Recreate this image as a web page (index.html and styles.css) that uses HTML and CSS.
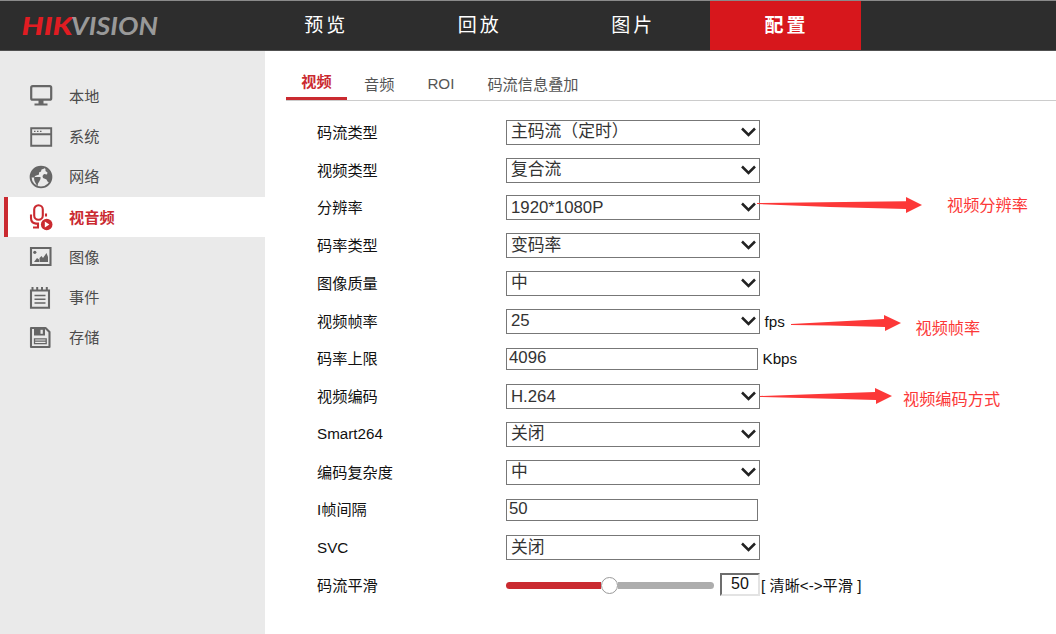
FILE: index.html
```html
<!DOCTYPE html>
<html lang="zh-CN">
<head>
  <meta charset="UTF-8">
  <meta name="viewport" content="width=device-width, initial-scale=1.0">
  <title>配置</title>
  <link rel="stylesheet" href="styles.css">
</head>
<body>

  <header class="header">
    <svg class="logo" width="150" height="48" viewBox="0 0 150 48">
      <text class="logo-red" x="1.500" y="34" textLength="51" lengthAdjust="spacingAndGlyphs">HIK</text>
      <text class="logo-gray" x="51" y="34" textLength="87" lengthAdjust="spacingAndGlyphs">VISION</text>
    </svg>
    <nav class="nav">
      <a class="nav-item">预览</a>
      <a class="nav-item">回放</a>
      <a class="nav-item">图片</a>
      <a class="nav-item active">配置</a>
    </nav>
  </header>

  <div class="page">
    <aside class="sidebar">
      <a class="menu-item">
        <svg class="icon" viewBox="0 0 24 24"><rect x="2.2" y="2.2" width="20" height="13.500" rx="1.5" fill="none" stroke="currentColor" stroke-width="2.2"/><path d="M9.5 16h5v3.500h4v2h-13v-2h4z"/></svg>
        <span>本地</span>
      </a>
      <a class="menu-item">
        <svg class="icon" viewBox="0 0 24 24"><path d="M2.2 3.2h20v17.6h-20zM2.2 9.2h20" fill="none" stroke="currentColor" stroke-width="1.9"/><path d="M5 5.7h1.5v1.2H5zM8 5.7h1.5v1.2H8zM11 5.7h1.5v1.2H11z"/></svg>
        <span>系统</span>
      </a>
      <a class="menu-item">
        <svg class="icon" viewBox="0 0 24 24"><circle cx="12" cy="12" r="10.4" fill="none" stroke="currentColor" stroke-width="1.9"/><path d="M12 1.500C6 1.500 1.500 6 1.500 12.500h3.500l1-.5h5.500v2l-1.500 3-1 1.500-.5 3-2-3.500-1-2-.5-2.500 1-2.500 4-1.500v-2l2-1 .5-2 3-1zM16.500 3l5 5 1 5-1.500 5-2.500-1.500-1-2-3.500-1.500-.5-2 1.500-2 3 .5.500-2-2-1.500z"/></svg>
        <span>网络</span>
      </a>
      <a class="menu-item active">
        <svg class="icon icon-mic" viewBox="0 0 24 27"><g fill="none" stroke="currentColor" stroke-width="2.1"><rect x="5.200" y="1.300" width="8.600" height="14.500" rx="4.300"/><path d="M2 10.500v3.500c0 3 2 5.300 5 5.600h3M9 19.500v4M4 23.500h6M17 9.500v3"/></g><circle cx="17.700" cy="20.500" r="5.800"/><path d="M15.800 17.600l4.600 2.900-4.600 2.900z" fill="#fff"/></svg>
        <span>视音频</span>
      </a>
      <a class="menu-item">
        <svg class="icon" viewBox="0 0 24 24"><path d="M2 3h19.500v17H2z" fill="none" stroke="currentColor" stroke-width="2.100"/><circle cx="5.800" cy="7.300" r="1.600"/><path d="M5 17l3-4 2 1.500V17zM10.500 17v-4l2-2 1.500 2 3.500-5 1.500 4v5z"/></svg>
        <span>图像</span>
      </a>
      <a class="menu-item">
        <svg class="icon" viewBox="0 0 24 24"><path d="M2 4.500h18v17.300H2z" fill="none" stroke="currentColor" stroke-width="2.100"/><path d="M2.500 1h2v3h-2zM7.200 1h2v3h-2zM12 1h2v3h-2zM16.800 1h2v3h-2z"/><path d="M5.500 9.500h11M5.500 13.300h11M5.500 17.100h11" stroke="currentColor" stroke-width="1.500"/></svg>
        <span>事件</span>
      </a>
      <a class="menu-item">
        <svg class="icon" viewBox="0 0 24 24"><path d="M2 2h14.500l4 4v15H2z" fill="none" stroke="currentColor" stroke-width="2.100" stroke-linejoin="round"/><path d="M5 2h11v7.500H5z"/><path d="M11.500 3.800h2.300v4h-2.300z" fill="#eaeaea"/><path d="M5.500 12.800h11.700v4.800H5.500zM5.500 15.200h11.700" fill="none" stroke="currentColor" stroke-width="1.300"/></svg>
        <span>存储</span>
      </a>
    </aside>

    <main class="content">
      <div class="tabs">
        <a class="tab active">视频</a>
        <a class="tab">音频</a>
        <a class="tab tab-roi">ROI</a>
        <a class="tab">码流信息叠加</a>
      </div>

      <form class="form">
        <div class="row">
          <label for="streamType">码流类型</label>
          <select id="streamType"><option>主码流（定时）</option></select>
        </div>
        <div class="row">
          <label for="videoType">视频类型</label>
          <select id="videoType"><option>复合流</option></select>
        </div>
        <div class="row">
          <label for="resolution">分辨率</label>
          <select id="resolution"><option>1920*1080P</option></select>
        </div>
        <div class="row">
          <label for="bitrateType">码率类型</label>
          <select id="bitrateType"><option>变码率</option></select>
        </div>
        <div class="row">
          <label for="quality">图像质量</label>
          <select id="quality"><option>中</option></select>
        </div>
        <div class="row">
          <label for="frameRate">视频帧率</label>
          <select id="frameRate"><option>25</option></select>
          <span class="unit">fps</span>
        </div>
        <div class="row">
          <label for="maxBitrate">码率上限</label>
          <input type="text" class="text-input" id="maxBitrate" value="4096">
          <span class="unit">Kbps</span>
        </div>
        <div class="row">
          <label for="encoding">视频编码</label>
          <select id="encoding"><option>H.264</option></select>
        </div>
        <div class="row">
          <label class="latin" for="smart264">Smart264</label>
          <select id="smart264"><option>关闭</option></select>
        </div>
        <div class="row">
          <label for="complexity">编码复杂度</label>
          <select id="complexity"><option>中</option></select>
        </div>
        <div class="row">
          <label for="iFrame">I帧间隔</label>
          <input type="text" class="text-input" id="iFrame" value="50">
        </div>
        <div class="row">
          <label class="latin" for="svc">SVC</label>
          <select id="svc"><option>关闭</option></select>
        </div>
        <div class="row">
          <label for="smoothing">码流平滑</label>
          <div class="slider">
            <span class="slider-fill"></span>
            <span class="slider-knob"></span>
            <span class="slider-rest"></span>
          </div>
          <input type="text" class="slider-value" id="smoothing" value="50">
          <span class="hint">[ 清晰&lt;-&gt;平滑 ]</span>
        </div>
      </form>
    </main>
  </div>

  <!-- red notes on top of the form -->
  <svg class="notes" width="1056" height="634" viewBox="0 0 1056 634">
    <path d="M757 203L906 201.300V197L922 205L906 213V209L830 207L757 204Z"/>
    <path d="M791 324L884 319V315L901 323L885 331V327L830 325.500L791 325Z"/>
    <path d="M760 396L875 392V388L892 396L876 404V400L840 399L760 397Z"/>
    <text x="947" y="211">视频分辨率</text>
    <text x="915.500" y="334">视频帧率</text>
    <text x="903" y="405">视频编码方式</text>
  </svg>

</body>
</html>
```
FILE: styles.css
```css
* {
  box-sizing: border-box;
}
body {
  margin: 0;
  width: 1056px;
  height: 634px;
  overflow: hidden;
  position: relative;
  background-color: #fff;
  color: #111;
  font-family: "Liberation Sans", "Noto Sans CJK SC", sans-serif;
  font-size: 15.2px;
}

/* top bar */
.header {
  display: flex;
  height: 51px;
  background-color: #2d2d2d;
  border-top: 1px solid #8a8a8a;
  border-bottom: 1px solid #505050;
}
.logo {
  margin: 0 79px 0 20px;
  font-family: Lato, sans-serif;
  font-size: 24.500px;
  font-style: italic;
}
.logo-red {
  fill: #e01c22;
  font-weight: 900;
}
.logo-gray {
  fill: #999;
  font-weight: 700;
}
.nav {
  display: flex;
}
.nav-item {
  width: 153.5px;
  padding-left: 1px;
  line-height: 49px;
  text-align: center;
  color: #fff;
  font-size: 19px;
  letter-spacing: 3px;
}
.nav-item.active {
  width: 151px;
  padding-left: 3px;
  background-color: #d7171c;
  font-weight: bold;
}

.page {
  display: flex;
  height: 583px;
}

/* left menu */
.sidebar {
  width: 265px;
  padding-top: 25.300px;
  background-color: #eaeaea;
}
.menu-item {
  display: flex;
  align-items: center;
  height: 40.250px;
  margin-left: 4px;
  padding-left: 25px;
  color: #4c4c4c;
}
.menu-item span {
  padding-bottom: 3px;
}
.menu-item.active {
  border-left: 4px solid #ca2a30;
  padding-left: 21px;
  background-color: #fff;
  color: #ca2a30;
  font-weight: bold;
}
.icon {
  width: 24px;
  height: 24px;
  margin-right: 16px;
  fill: currentColor;
  color: #666;
}
.icon-mic {
  height: 27px;
  color: #ca2a30;
}

/* right side */
.content {
  flex: 1;
  padding: 13px 0 0 21px;
}
.tabs {
  display: flex;
  height: 37px;
  border-bottom: 1px solid #ccc;
  color: #555;
  line-height: 41px;
}
.tab {
  margin-right: 33px;
}
.tab.active {
  width: 61px;
  height: 36px;
  margin-right: 17px;
  border-bottom: 3px solid #ca2a30;
  color: #ca2a30;
  font-weight: bold;
  line-height: 35px;
  text-align: center;
}
.tab-roi {
  line-height: 40px;
}

.form {
  padding: 12.600px 0 0 31px;
}
.row {
  display: flex;
  align-items: center;
  height: 37.750px;
}
.row label {
  width: 189px;
  padding-bottom: 3px;
}
.row label.latin {
  padding-bottom: 1px;
}
select,
.text-input {
  width: 254px;
  height: 25px;
  margin: 0;
  padding: 0 0 1px 4px;
  border: 1px solid #777;
  border-radius: 0;
  background-color: #fff;
  color: #333;
  font-family: inherit;
  font-size: 16.800px;
}
select {
  appearance: none;
  background-image: url("data:image/svg+xml,%3Csvg xmlns='http://www.w3.org/2000/svg' width='15' height='10'%3E%3Cpath d='M1 1.500L7.500 8L14 1.500' fill='none' stroke='%23222' stroke-width='2.500'/%3E%3C/svg%3E");
  background-repeat: no-repeat;
  background-position: right 3px top 6px;
}
.text-input {
  width: 252px;
  height: 22px;
  padding: 0 0 1px 2px;
}
.unit {
  margin-left: 4.500px;
}

.slider {
  display: flex;
  align-items: center;
  width: 208px;
}
.slider-fill,
.slider-rest {
  height: 7px;
  background-color: #ca2a30;
  border-radius: 4px 0 0 4px;
}
.slider-fill {
  width: 95px;
}
.slider-rest {
  flex: 1;
  background-color: #adadad;
  border-radius: 0 4px 4px 0;
}
.slider-knob {
  width: 17px;
  height: 17px;
  border: 1px solid #999;
  border-radius: 50%;
  background-color: #fff;
}
.slider-value {
  width: 40px;
  height: 23px;
  margin: 0 1px 2px 6px;
  padding: 0;
  border: 2px solid;
  border-color: #6d6d6d #e3e3e3 #e3e3e3 #6d6d6d;
  color: #111;
  font-family: inherit;
  font-size: 16px;
  text-align: center;
}
.hint {
  padding-bottom: 3px;
}

.notes {
  position: absolute;
  left: 0;
  top: 0;
  fill: #fc3838;
  font-size: 16.200px;
  pointer-events: none;
}
```
